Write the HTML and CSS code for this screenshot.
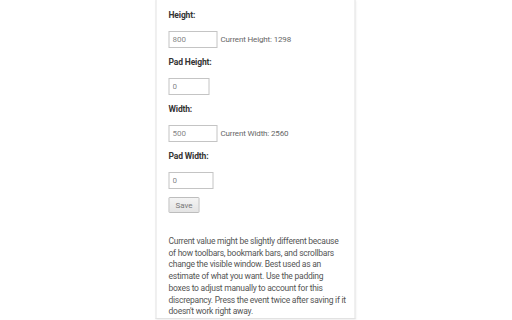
FILE: index.html
```html
<!DOCTYPE html>
<html>
<head>
<meta charset="utf-8">
<link rel="stylesheet" href="styles.css">
</head>
<body>
<div class="panel">
  <div class="label">Height:</div>
  <div class="row"><input class="box w49" type="text" value="800"><span class="cur">Current Height: 1298</span></div>
  <div class="label">Pad Height:</div>
  <div class="row"><input class="box w41" type="text" value="0"></div>
  <div class="label">Width:</div>
  <div class="row"><input class="box w49" type="text" value="500"><span class="cur">Current Width: 2560</span></div>
  <div class="label">Pad Width:</div>
  <div class="row"><input class="box w45" type="text" value="0"></div>
  <button class="save">Save</button>
  <p class="note">Current value might be slightly different because<br>of how toolbars, bookmark bars, and scrollbars<br>change the visible window. Best used as an<br>estimate of what you want. Use the padding<br>boxes to adjust manually to account for this<br>discrepancy. Press the event twice after saving if it<br>doesn't work right away.</p>
</div>
</body>
</html>
```
FILE: styles.css
```css
html, body {
  margin: 0;
  padding: 0;
  background: #ffffff;
}
body {
  width: 512px;
  height: 320px;
  overflow: hidden;
  font-family: "Roboto", "Liberation Sans", sans-serif;
}
.panel {
  box-sizing: border-box;
  width: 200px;
  height: 319px;
  margin: 0 auto;
  padding: 9px 8px 0 12px;
  background: #fff;
  border-left: 1px solid #e2e2e2;
  border-right: 1px solid #e2e2e2;
  border-bottom: 1px solid #e2e2e2;
  box-shadow: 0 1px 2px rgba(0,0,0,0.08);
  transform: translateX(-0.5px);
}
.label {
  font-size: 8.5px;
  font-weight: bold;
  color: #333;
  line-height: 12px;
  height: 12px;
  letter-spacing: -0.15px;
}
.row {
  display: flex;
  align-items: center;
  gap: 3px;
  margin-top: 9.5px;
  margin-bottom: 8.5px;
  height: 17px;
}
.box {
  box-sizing: border-box;
  height: 17px;
  margin: 0;
  padding: 0 3px;
  border: 1px solid #c4c4c4;
  font-family: inherit;
  font-size: 8px;
  color: #888;
  background: #fff;
  outline: none;
}
.w49 { width: 49px; }
.w41 { width: 41px; }
.w45 { width: 45px; }
.cur {
  font-size: 8px;
  color: #666;
  letter-spacing: -0.15px;
}
.save {
  display: block;
  box-sizing: border-box;
  width: 31px;
  height: 16px;
  margin: 0;
  padding: 0;
  border: 1px solid #bdbdbd;
  border-radius: 1px;
  background: linear-gradient(#f4f4f4, #e4e4e4);
  font-family: inherit;
  font-size: 8px;
  color: #777;
}
.note {
  margin: 23px 0 0 0;
  white-space: nowrap;
  font-size: 8.5px;
  letter-spacing: -0.25px;
  line-height: 11.7px;
  color: #555;
}
```
